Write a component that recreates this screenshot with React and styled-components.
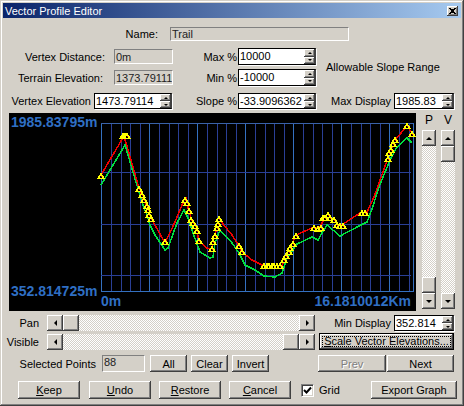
import React from 'react';
import styled, { createGlobalStyle } from 'styled-components';

const GlobalStyle = createGlobalStyle`
  html, body { margin: 0; padding: 0; background: #d4d0c8; }
  body { font-family: "Liberation Sans", Arial, sans-serif; font-size: 11px; color: #000; }
  * { box-sizing: border-box; }
`;

const FACE = '#d4d0c8';

const raised = `
  background: ${FACE};
  box-shadow: inset -1px -1px #404040, inset 1px 1px #fff, inset -2px -2px #808080, inset 2px 2px ${FACE};
`;

const Window = styled.div`
  width: 464px;
  height: 406px;
  padding: 3px;
  background: ${FACE};
  box-shadow: inset -1px -1px #404040, inset 1px 1px ${FACE}, inset -2px -2px #808080, inset 2px 2px #fff;
  overflow: hidden;
`;
const TitleBar = styled.div`
  height: 15px;
  padding: 0 3px 0 2px;
  display: flex;
  align-items: center;
  justify-content: space-between;
  background: linear-gradient(90deg, #0a246a, #a6caf0);
  color: #fff;
  font-size: 11px;
`;
const CloseButton = styled.div`
  width: 11px;
  height: 10px;
  ${raised}
  display: flex;
  align-items: center;
  justify-content: center;
`;
const Row = styled.div`
  display: flex;
  align-items: center;
  height: ${(p) => p.$h}px;
  margin-top: ${(p) => p.$top || 0}px;
  padding-right: ${(p) => p.$pr || 0}px;
`;
const Label = styled.div`
  width: ${(p) => p.$w}px;
  flex: none;
  text-align: right;
  white-space: nowrap;
  line-height: 14px;
`;
const Sunken = styled.div`
  width: ${(p) => p.$w}px;
  height: ${(p) => p.$h || 15}px;
  margin-left: ${(p) => p.$ml || 0}px;
  flex: none;
  padding: 0 1px;
  line-height: ${(p) => p.$lh || 14}px;
  color: #222;
  border: 1px solid;
  border-color: #808080 #fff #fff #808080;
  white-space: nowrap;
  overflow: hidden;
`;
const Top = styled.div`
  display: flex;
  margin-top: 7px;
  height: 61px;
`;
const FormColumn = styled.div`
  width: ${(p) => p.$w}px;
  flex: none;
  display: flex;
  flex-direction: column;
`;
const SlopeNote = styled.div`
  height: 45px;
  padding: 13px 0 0 10px;
  white-space: nowrap;
`;
const SpinWrap = styled.div`
  width: ${(p) => p.$w}px;
  height: ${(p) => p.$h || 17}px;
  margin-left: ${(p) => p.$ml || 0}px;
  flex: none;
  display: flex;
  background: #fff;
  border: 1px solid #000;
  border-right-color: #404040;
  box-shadow: 1px 1px 0 #fff;
`;
const SpinValue = styled.div`
  flex: 1;
  padding-left: 1px;
  line-height: 14px;
  white-space: nowrap;
  overflow: hidden;
`;
const SpinButtons = styled.div`
  width: 11px;
  flex: none;
  display: flex;
  flex-direction: column;
`;
const SpinButton = styled.div`
  flex: 1;
  ${raised}
  display: flex;
  align-items: center;
  justify-content: center;
`;
const Arrow = styled.span`
  display: block;
  width: 0;
  height: 0;
  border-style: solid;
  border-color: transparent;
  ${(p) => {
    const s = p.$size || 3;
    if (p.$dir === 'up') return `border-width: 0 ${s}px ${s}px; border-bottom-color: #000;`;
    if (p.$dir === 'down') return `border-width: ${s}px ${s}px 0; border-top-color: #000;`;
    if (p.$dir === 'left') return `border-width: ${s}px ${s}px ${s}px 0; border-right-color: #000;`;
    return `border-width: ${s}px 0 ${s}px ${s}px; border-left-color: #000;`;
  }}
`;
const ChartRow = styled.div`
  display: flex;
  height: 198px;
  margin-top: 4px;
  padding-left: 6px;
`;
const ChartSvg = styled.svg`
  display: block;
  width: 407px;
  height: 198px;
  flex: none;
  background: #000;
`;
const ChartText = styled.text`
  font-family: "Liberation Sans", Arial, sans-serif;
  font-weight: 700;
  font-size: 14px;
  fill: #2f6fc4;
`;
const SideBars = styled.div`
  display: flex;
  gap: 5px;
  margin-left: 6px;
`;
const SideBar = styled.div`
  width: 14px;
  display: flex;
  flex-direction: column;
  align-items: center;
`;
const SideLabel = styled.div`
  height: 17px;
  font-size: 12px;
  line-height: 15px;
`;
const Track = styled.div`
  flex: 1;
  display: flex;
  flex-direction: ${(p) => (p.$vertical ? 'column' : 'row')};
  justify-content: ${(p) => p.$justify || 'flex-start'};
  align-self: stretch;
  min-width: 0;
  background: repeating-conic-gradient(#fff 0 25%, ${FACE} 0 50%) 0 0 / 2px 2px;
`;
const ScrollBar = styled.div`
  display: flex;
  flex-direction: ${(p) => (p.$vertical ? 'column' : 'row')};
  width: ${(p) => (p.$vertical ? '14px' : `${p.$w}px`)};
  height: ${(p) => (p.$vertical ? '179px' : '16px')};
  margin-left: ${(p) => p.$ml || 0}px;
  flex: none;
`;
const ScrollButton = styled.div`
  width: ${(p) => (p.$vertical ? 14 : 16)}px;
  height: 16px;
  flex: none;
  ${raised}
  display: flex;
  align-items: center;
  justify-content: center;
`;
const Thumb = styled.div`
  width: ${(p) => (p.$vertical ? 14 : 16)}px;
  height: 16px;
  flex: none;
  ${raised}
`;
const Button = styled.div`
  width: ${(p) => p.$w}px;
  height: ${(p) => p.$h || 17}px;
  margin-left: ${(p) => p.$ml || 0}px;
  flex: none;
  ${raised}
  display: flex;
  align-items: center;
  justify-content: center;
  white-space: nowrap;
  color: ${(p) => (p.$disabled ? '#808080' : '#000')};
  text-shadow: ${(p) => (p.$disabled ? '1px 1px #fff' : 'none')};
`;
const FocusButton = styled.div`
  width: 135px;
  height: 17px;
  margin-left: 4px;
  flex: none;
  border: 1px solid #000;
  ${raised}
  display: flex;
  padding: 2px;
`;
const FocusInner = styled.div`
  flex: 1;
  border: 1px dotted #000;
  display: flex;
  align-items: center;
  justify-content: center;
  white-space: nowrap;
  line-height: 11px;
`;
const CheckBox = styled.div`
  width: 13px;
  height: 13px;
  margin-left: 10px;
  flex: none;
  background: #fff;
  border: 1px solid;
  border-color: #808080 #fff #fff #808080;
  box-shadow: inset 1px 1px #404040, inset -1px -1px ${FACE};
  display: flex;
  align-items: center;
  justify-content: center;
`;
const CheckLabel = styled.div`
  margin-left: 5px;
`;
const ExportButton = styled(Button)`
  margin-left: auto;
`;

const RED = [
  [101, 175], [124, 136], [139, 188], [143, 198], [147, 207], [151, 218], [165, 243], [175, 222],
  [182, 205], [186, 198], [189, 212], [192, 220], [195, 225], [197, 232], [199, 241], [207, 248],
  [212, 249], [213, 242], [215, 235], [217, 228], [219, 219], [232, 235], [239, 246], [242, 252],
  [252, 260], [264, 266], [282, 266], [284, 260], [290, 248], [296, 235], [312, 228], [319, 228],
  [327, 215], [335, 222], [340, 226], [360, 213], [367, 212], [374, 197], [388, 158], [390, 152],
  [394, 143], [395, 140], [407, 126], [412, 133],
];
const GREEN = [
  [101, 185], [125, 145], [139, 192], [144, 208], [147, 215], [150, 225], [155, 235], [165, 250],
  [168, 248], [177, 223], [184, 210], [188, 218], [193, 233], [200, 252], [210, 258], [213, 257],
  [215, 243], [220, 230], [232, 243], [239, 253], [245, 265], [255, 270], [264, 276], [275, 277],
  [282, 273], [287, 258], [297, 244], [312, 237], [318, 240], [322, 233], [327, 225], [340, 236],
  [359, 226], [367, 222], [372, 209], [379, 187], [390, 160], [397, 147], [407, 138], [412, 143],
];
const SELECTED = [
  [101, 178], [123, 138], [125, 138], [127, 138], [139, 191], [142, 197], [144, 202], [147, 208],
  [148, 212], [149, 217], [151, 221], [165, 244], [185, 202], [187, 205], [189, 213], [191, 222],
  [193, 225], [195, 228], [197, 233], [199, 243], [212, 251], [213, 244], [215, 238], [217, 230],
  [218, 226], [219, 221], [239, 248], [242, 254], [264, 268], [267, 268], [269, 268], [272, 268],
  [274, 268], [277, 268], [280, 268], [284, 262], [286, 258], [289, 254], [290, 250], [293, 246],
  [296, 238], [314, 230], [318, 231], [321, 230], [323, 220], [325, 220], [328, 217], [330, 220],
  [334, 222], [337, 227], [340, 228], [343, 228], [362, 215], [365, 215], [388, 161], [389, 155],
  [391, 152], [393, 146], [395, 142], [407, 128], [412, 136],
];
const V_LINES = Array.from({ length: 33 }, (_, i) => i);
const H_LINES = [172, 224, 275];

const toPoints = (pts) => pts.map((p) => p.join(',')).join(' ');

function Chart() {
  return (
    <ChartSvg viewBox="9 113 407 198" shapeRendering="crispEdges">
      {V_LINES.map((i) => {
        const x = Math.round(101.3 + i * 9.6) + 0.5;
        return <line key={i} x1={x} x2={x} y1={123} y2={291} stroke={i % 5 === 0 ? '#3470c0' : '#2a3f96'} />;
      })}
      {H_LINES.map((y) => (
        <line key={y} x1={101} x2={411} y1={y + 0.5} y2={y + 0.5} stroke="#2a3f96" />
      ))}
      <line x1={101} x2={414} y1={123.5} y2={123.5} stroke="#3a62a8" />
      <line x1={101} x2={414} y1={291.5} y2={291.5} stroke="#3470c0" />
      <line x1={413.5} x2={413.5} y1={123} y2={291} stroke="#3470c0" />
      <polyline points={toPoints(GREEN)} fill="none" stroke="#00e040" strokeWidth={1.5} />
      <polyline points={toPoints(RED)} fill="none" stroke="#f00000" strokeWidth={1.5} />
      {SELECTED.map(([x, y], i) => (
        <g key={i}>
          <polygon points={`${x - 4},${y + 1} ${x + 4},${y + 1} ${x},${y - 6}`} fill="#ffff00" />
          <rect x={x - 1} y={y - 2} width={2} height={2} fill="#000" />
          <rect x={x} y={y - 2} width={1} height={1} fill="#f00000" />
        </g>
      ))}
      <ChartText x={11} y={127}>1985.83795m</ChartText>
      <ChartText x={11} y={296}>352.814725m</ChartText>
      <ChartText x={101} y={306}>0m</ChartText>
      <ChartText x={411} y={306} textAnchor="end">16.1810012Km</ChartText>
    </ChartSvg>
  );
}

function Spin({ value, w, h, ml }) {
  return (
    <SpinWrap $w={w} $h={h} $ml={ml}>
      <SpinValue>{value}</SpinValue>
      <SpinButtons>
        <SpinButton><Arrow $dir="up" $size={2} /></SpinButton>
        <SpinButton><Arrow $dir="down" $size={2} /></SpinButton>
      </SpinButtons>
    </SpinWrap>
  );
}

function HBar({ w, thumbAt }) {
  return (
    <ScrollBar $w={w} $ml={8}>
      <ScrollButton><Arrow $dir="left" /></ScrollButton>
      <Track $justify={thumbAt === 'end' ? 'flex-end' : 'flex-start'}><Thumb /></Track>
      <ScrollButton><Arrow $dir="right" /></ScrollButton>
    </ScrollBar>
  );
}

function VBar({ label, thumbAt }) {
  return (
    <SideBar>
      <SideLabel>{label}</SideLabel>
      <ScrollBar $vertical>
        <ScrollButton $vertical><Arrow $dir="up" /></ScrollButton>
        <Track $vertical $justify={thumbAt === 'end' ? 'flex-end' : 'flex-start'}>
          <Thumb $vertical />
        </Track>
        <ScrollButton $vertical><Arrow $dir="down" /></ScrollButton>
      </ScrollBar>
    </SideBar>
  );
}

export default function App() {
  return (
    <Window>
      <GlobalStyle />
      <TitleBar>
        <span>Vector Profile Editor</span>
        <CloseButton>
          <svg width="7" height="6" viewBox="0 0 7 6" shapeRendering="crispEdges">
            <path d="M0 0h2v1h3V0h2v1H6v1H5v2h1v1h1v1H5V5H2v1H0V5h1V4h1V2H1V1H0z" fill="#000" />
          </svg>
        </CloseButton>
      </TitleBar>

      <Row $h={14} $top={9}>
        <Label $w={155}>Name:</Label>
        <Sunken $w={179} $h={14} $ml={12} $lh={12}>Trail</Sunken>
      </Row>

      <Top>
        <FormColumn $w={170}>
          <Row $h={17}>
            <Label $w={102}>Vertex Distance:</Label>
            <Sunken $w={59} $ml={9}>0m</Sunken>
          </Row>
          <Row $h={17} $top={4}>
            <Label $w={100}>Terrain Elevation:</Label>
            <Sunken $w={59} $ml={11}>1373.79111</Sunken>
          </Row>
          <Row $h={16} $top={7}>
            <Label $w={88}>Vertex Elevation</Label>
            <Spin value="1473.79114" w={78} h={16} ml={3} />
          </Row>
        </FormColumn>
        <FormColumn $w={143}>
          <Row $h={17}>
            <Label $w={64}>Max %</Label>
            <Spin value="10000" w={78} ml={1} />
          </Row>
          <Row $h={17} $top={4}>
            <Label $w={64}>Min %</Label>
            <Spin value="-10000" w={78} ml={1} />
          </Row>
          <Row $h={16} $top={7}>
            <Label $w={64}>Slope %</Label>
            <Spin value="-33.9096362" w={78} h={16} ml={1} />
          </Row>
        </FormColumn>
        <FormColumn $w={142}>
          <SlopeNote>Allowable Slope Range</SlopeNote>
          <Row $h={16}>
            <Label $w={75}>Max Display</Label>
            <Spin value="1985.83" w={60} h={16} ml={3} />
          </Row>
        </FormColumn>
      </Top>

      <ChartRow>
        <Chart />
        <SideBars>
          <VBar label="P" thumbAt="end" />
          <VBar label="V" />
        </SideBars>
      </ChartRow>

      <Row $h={16} $top={4}>
        <Label $w={36}>Pan</Label>
        <HBar w={268} />
        <Label $w={76}>Min Display</Label>
        <Spin value="352.814" w={60} h={16} ml={3} />
      </Row>
      <Row $h={17} $top={2}>
        <Label $w={36}>Visible</Label>
        <HBar w={268} thumbAt="end" />
        <FocusButton>
          <FocusInner><span><u>S</u>cale Vector Elevations...</span></FocusInner>
        </FocusButton>
      </Row>
      <Row $h={17} $top={5}>
        <Label $w={93}>Selected Points</Label>
        <Sunken $w={43} $h={17} $ml={6} $lh={12}>88</Sunken>
        <Button $w={37} $ml={5}>All</Button>
        <Button $w={37} $ml={4}>Clear</Button>
        <Button $w={37} $ml={4}>Invert</Button>
        <Button $w={68} $ml={49} $disabled>Prev</Button>
        <Button $w={67} $ml={1}>Next</Button>
      </Row>
      <Row $h={18} $top={9} $pr={4}>
        <Button $w={62} $h={18} $ml={15}><span><u>K</u>eep</span></Button>
        <Button $w={62} $h={18} $ml={9}><span><u>U</u>ndo</span></Button>
        <Button $w={62} $h={18} $ml={8}><span><u>R</u>estore</span></Button>
        <Button $w={62} $h={18} $ml={8}><span><u>C</u>ancel</span></Button>
        <CheckBox>
          <svg width="9" height="9" viewBox="0 0 9 9">
            <path d="M1 4l2.5 2.5L8 1.5" fill="none" stroke="#000" strokeWidth="2" />
          </svg>
        </CheckBox>
        <CheckLabel>Grid</CheckLabel>
        <ExportButton $w={86} $h={18}>Export Graph</ExportButton>
      </Row>
    </Window>
  );
}
